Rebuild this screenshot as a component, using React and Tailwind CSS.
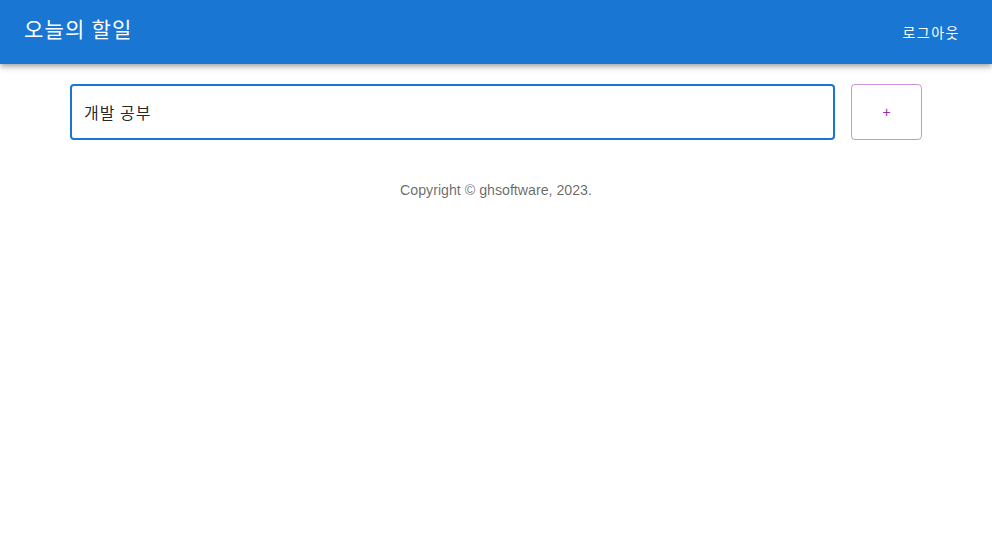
import React, { useState } from 'react';

export default function App() {
    const [todo, setTodo] = useState('개발 공부');

    return (
        <div className="min-h-screen bg-white" style={{ fontFamily: '"Liberation Sans", "Noto Sans CJK KR", sans-serif' }}>
            <header className="h-16 bg-[#1976d2] text-white flex items-center justify-between pl-6 pr-6 shadow-[0_2px_4px_-1px_rgba(0,0,0,0.2),0_4px_5px_0_rgba(0,0,0,0.14),0_1px_10px_0_rgba(0,0,0,0.12)] relative z-10">
                <h1 className="text-[21px] font-normal tracking-[1.2px] leading-none -mt-2" style={{ fontFamily: '"Noto Sans CJK KR", sans-serif' }}>오늘의 할일</h1>
                <button className="text-[14px] px-2 py-1.5 font-normal tracking-[1.5px]" style={{ fontFamily: '"Noto Sans CJK KR", sans-serif' }}>로그아웃</button>
            </header>

            <div className="max-w-[900px] mx-auto px-6">
                <div className="flex gap-4 mt-5">
                    <input
                        value={todo}
                        onChange={(e) => setTodo(e.target.value)}
                        className="flex-1 h-14 rounded border-2 border-[#1976d2] px-[12px] text-[16px] tracking-[1px] text-[rgba(0,0,0,0.87)] outline-none"
                        style={{ fontFamily: '"Noto Sans CJK KR", sans-serif' }}
                    />
                    <button className="w-[71px] h-14 rounded border border-[rgba(156,39,176,0.5)] text-[#9c27b0] text-[14px]">+</button>
                </div>
                <p className="text-center text-[14.2px] text-[rgba(0,0,0,0.6)] mt-10">Copyright © ghsoftware, 2023.</p>
            </div>
        </div>
    );
}
